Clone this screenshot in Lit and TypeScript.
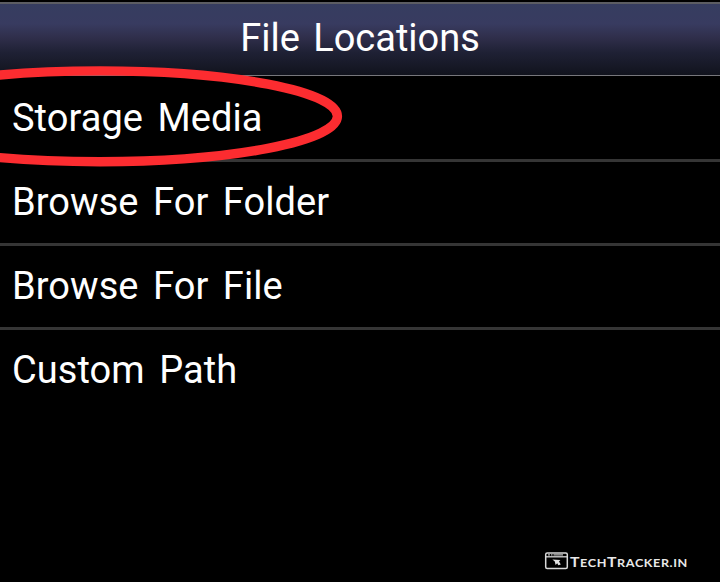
import { LitElement, html, svg, css } from "lit";
import { customElement } from "lit/decorators.js";

@customElement("app-root")
export class AppRoot extends LitElement {
  static styles = css`
    :host {
      display: block;
      position: relative;
      width: 720px;
      height: 582px;
      overflow: hidden;
      background: #000;
      color: #fff;
      font-family: Roboto, "Liberation Sans", sans-serif;
      font-size: 38px;
    }
    .screen {
      display: flex;
      flex-direction: column;
      height: 100%;
      padding-top: 2px;
      box-sizing: border-box;
    }
    .title {
      box-sizing: border-box;
      height: 74px;
      margin: 0 0 2px;
      border-top: 2px solid #5c5d63;
      border-bottom: 1px solid #77777c;
      background: linear-gradient(#363d60 0%, #383b60 28%, #2f2e4a 48%, #1f2135 68%, #11131d 100%);
      text-align: center;
      font-size: 38px;
      font-weight: 400;
      line-height: 69px;
      word-spacing: 4px;
    }
    .list {
      flex: 1;
      margin: 0;
      padding: 0;
      list-style: none;
    }
    .row {
      box-sizing: border-box;
      height: 84px;
      padding-left: 12px;
      border-bottom: 3px solid #353535;
      line-height: 81px;
      white-space: nowrap;
      letter-spacing: 0.06px;
      word-spacing: 5px;
    }
    .row:last-child {
      border-bottom: 0;
    }
    .brand {
      display: flex;
      align-items: center;
      gap: 1px;
      height: 20px;
      margin: 0 0 11px 544px;
      color: #e8e8e8;
      font-family: Lato, sans-serif;
      font-weight: 700;
      font-size: 10.5px;
      line-height: 20px;
      letter-spacing: 0.5px;
      white-space: nowrap;
    }
    .name {
      display: block;
      transform: translateY(0.5px) scaleX(1.2);
      transform-origin: left center;
    }
    .cap {
      font-size: 13.2px;
    }
    .logo {
      flex: none;
      display: block;
    }
    .ring {
      position: absolute;
      left: 0;
      top: 60px;
    }
  `;

  private items = ["Storage Media", "Browse For Folder", "Browse For File", "Custom Path"];

  render() {
    return html`
      <div class="screen">
        <h1 class="title">File Locations</h1>
        <ul class="list">
          ${this.items.map((item) => html`<li class="row">${item}</li>`)}
        </ul>
        <div class="brand">
          <svg class="logo" width="25" height="18" viewBox="0 0 25 18" fill="none">
            <rect x="1.7" y="1" width="21.6" height="15.6" rx="1.5" stroke="#d8d8d8" stroke-width="1.5" />
            <path d="M2 4.8H23" stroke="#d8d8d8" stroke-width="1.3" />
            <path d="M4 2.8H6M7 2.8H8.5M9.5 2.8H19" stroke="#bbb" stroke-width="1.2" />
            <path d="M8.4 7.4L16.4 8L15 9.4L16.8 12.6L14.4 13.2L13.2 11.2L11.6 13L10.8 9.4Z" fill="#e4e4e4" />
          </svg>
          <span class="name"><span class="cap">T</span>ECH<span class="cap">T</span>RACKER.IN</span>
        </div>
      </div>
      <svg class="ring" width="360" height="112" viewBox="0 60 360 112" fill="none">
        ${svg`<ellipse cx="100" cy="116.3" rx="237.4" ry="45.4" stroke="#fc2c30" stroke-width="9.4" />`}
      </svg>
    `;
  }
}
